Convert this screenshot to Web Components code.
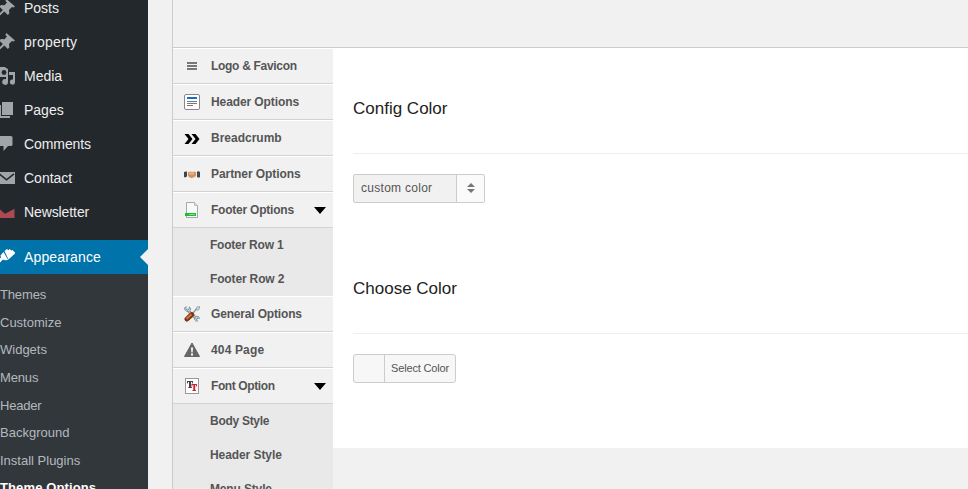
<!DOCTYPE html>
<html lang="en"><head><meta charset="utf-8"><title>Theme Options</title>
<style>html,body{margin:0;height:100%;overflow:hidden;background:#f1f1f1;font-family:"Liberation Sans",Arial,sans-serif}</style></head>
<body><admin-page></admin-page>
<script>
const icons={
pin:'<svg width="20" height="20" viewBox="0 0 20 20"><path fill="#a0a5aa" d="M10.400 3l1-2L20 8.500l-1.800 1-1.300-.4-2.900 3 .3 3.400-1.500 1.500-3.500-3.500L4.700 17.800 2 19.400l1.500-2.800L7.900 12 4.400 8.600 6 7l3.500.3 2.500-2.800z"/></svg>',
media:'<svg width="20" height="20" viewBox="0 0 20 20"><path fill="#a0a5aa" d="M2 3l2-1 1-1h5l1 1 2 1v8H2z"/><circle cx="9" cy="6.500" r="2.400" fill="#23282d"/><path fill="#a0a5aa" d="M14 6h6v10a2.600 2.600 0 1 1-2-2.500V9h-4zM12 9h1v7a2.900 2.900 0 1 1-2-2.800V11z"/></svg>',
pages:'<svg width="20" height="20" viewBox="0 0 20 20"><path fill="#a0a5aa" d="M7 2h11v13H7zM3 5h3v11h9v2H3z"/></svg>',
comments:'<svg width="20" height="20" viewBox="0 0 20 20"><path fill="#a0a5aa" d="M4 2h12q1.500 0 1.500 1.500v7Q17.500 12 16 12h-3l-4.500 5v-5H4z"/></svg>',
mail:'<svg width="20" height="20" viewBox="0 0 20 20"><path fill="#a0a5aa" d="M2 4h18v12H2z"/><path fill="none" stroke="#23282d" stroke-width="1.600" d="M3 4.800l8.500 7 7.500-6"/></svg>',
news:'<svg width="20" height="20" viewBox="0 0 20 20"><path fill="#ad4950" d="M2 5l8 6.800 9.500-5V16H2z"/></svg>',
brush:'<svg width="20" height="20" viewBox="0 0 20 20"><path fill="#fff" d="M9.500 4L12 2l1.500 1.300L14.500 2l1.800 1.500L17.500 3l3 3-7 6.500zM8.500 5l4.700 8-3.500.3-1.700-.8-5 4.800-2.500.7.500-2.500 5-5-.5-2z"/></svg>',
bars:'<svg width="16" height="16" viewBox="0 0 16 16"><path fill="#777" d="M3 4h10v2H3zm0 3h10v2H3zm0 3h10v2H3z"/></svg>',
doc:'<svg width="16" height="16" viewBox="0 0 16 16"><rect x=".5" y=".5" width="15" height="15" rx="1.500" fill="#fff" stroke="#888"/><path fill="#176fc1" d="M3 3h10v2H3z"/><path stroke="#777" d="M3 7.500h10M3 9.500h10M3 11.500h6"/></svg>',
crumb:'<svg width="16" height="16" viewBox="0 0 16 16"><path fill="#000" d="M.5 4h4l4 5-4 5h-4l4-5zM7.500 4h4l4 5-4 5h-4l4-5z"/></svg>',
partner:'<svg width="16" height="16" viewBox="0 0 16 16"><path fill="#444" d="M0 6q2-1 3-.4v5Q1 12 0 11zM13 5.500q2-.5 3 .5v5q-1 1-3 0z"/><path fill="#eee" d="M3 6h1.500v5H3zm8.500 0H13v5h-1.500z"/><path fill="#cf9366" d="M4 6.200q3-1.500 4-.2 2-1 4 .2V10q-4 3-6 1.400L4 10z"/><path fill="#e7b589" d="M5 6.500h5v2H5z"/></svg>',
footer:'<svg width="16" height="16" viewBox="0 0 16 16"><path fill="#f7faf9" stroke="#a2adab" d="M2.500.5h8l3 3v12h-11z"/><path fill="#dae2df" stroke="#9da9a6" stroke-width=".7" d="M10.500.5v3h3"/><path fill="#20ba35" d="M1 11h2v3H1zM3 11h9v3H3z"/><path fill="#99e69f" d="M5 12h6v.8H5z"/></svg>',
tools:'<svg width="16" height="16" viewBox="0 0 16 16"><path fill="none" stroke="#70848a" stroke-width="2.800" d="M3 3.500l10 10"/><path fill="none" stroke="#c7d2d4" stroke-width="1.200" d="M3 3.500l10 10"/><path fill="#d4dddd" stroke="#768990" stroke-width=".8" d="M2 .5v2.700l1.500 1 1.700-1V.8q2 1 1.400 3.200Q5.500 6 3 5.500.2 4.400.5 2zM11 12l1.500-2q2.800.2 3 2.500l-2-.7-1 1.500 1 1.900q-2 .2-2.800-1.300z"/><path stroke="#8c9ca0" stroke-width="1.500" d="M8.500 7.500l4.500-5"/><path fill="#d7dfdf" stroke="#788a8e" stroke-width=".7" d="M11.800 3.500l1-2.300L15.500.5V2l-1.200 2.200z"/><path stroke="#7d3515" stroke-width="5" stroke-linecap="round" d="M3 13l4.700-4.300"/><path stroke="#d7763b" stroke-width="2" d="M2.500 12.800l5-4.600"/></svg>',
warn:'<svg width="16" height="16" viewBox="0 0 16 16"><path fill="#666" stroke="#666" stroke-linejoin="round" d="M8 1l7.500 13.500H.5z"/><path fill="#fff" d="M7 5.500h2l-.4 5H7.400zM7 11.500h2v2H7z"/></svg>',
font:'<svg width="16" height="16" viewBox="0 0 16 16"><rect x="1.500" y=".5" width="13" height="15" fill="#fff" stroke="#999"/><path fill="#444" d="M3 3h6v2.500h-.7L8 4h-.9v5h.8v1H4.300V9H5V4h-.8l-.5 1.500H3z"/><path fill="#cf2230" d="M7.500 6H13v2.500h-.7L12 7h-.8v5h.8v1H8.500v-1h.8V7h-.8l-.3 1.500h-.7z"/></svg>'
};
function define(name,markup,setup){
 const t=document.createElement('template');t.innerHTML=markup;
 customElements.define(name,class extends HTMLElement{constructor(){super();this.attachShadow({mode:'open'}).append(t.content.cloneNode(true));}
 connectedCallback(){setup&&setup(this,this.shadowRoot)}});
}
const setIcon=(h,r)=>{r.querySelector('.icon').innerHTML=icons[h.getAttribute('icon')]||''};
define('admin-item',`<style>:host{display:flex;height:34px;align-items:center;color:#eee;font-size:14px;position:relative;white-space:nowrap}.icon{width:20px;height:20px;margin-left:-5px;margin-right:9px;flex:none}:host([active]){background:#0073aa;color:#fff;margin-top:11px}:host([active])::after{content:"";position:absolute;right:0;top:9px;border:8px solid transparent;border-left-width:0;border-right-color:#f1f1f1}svg{display:block}span{letter-spacing:var(--track,0)}</style><div class="icon"></div><span><slot></slot></span>`,setIcon);
define('admin-link',`<style>:host{display:flex;height:27.600px;align-items:center;font-size:13px;color:#b4b9be;white-space:nowrap;letter-spacing:var(--track,0)}:host([current]){color:#fff;font-weight:bold}</style><slot></slot>`);
define('admin-sidebar',`<style>:host{display:block;width:148px;height:498px;margin-top:-9px;background:#23282d;flex:none}.sub{background:#32373c;height:230px;padding-top:7px;box-sizing:border-box}</style><slot></slot><div class="sub"><slot name="sub"></slot></div>`);
define('option-row',`<style>:host{display:flex;box-sizing:border-box;height:36px;align-items:center;background:#f1f1f1;border-top:1px solid #fff;border-bottom:1px solid #d2d2d2;font:bold 12px "Liberation Sans",Arial,sans-serif;color:#555;padding:0 7px 0 11px;white-space:nowrap}.icon{width:16px;height:16px;margin-right:11px}svg{display:block}.label{flex:1;letter-spacing:var(--track,0)}.arrow{display:none;border:6px solid transparent;border-top:7px solid #000;border-bottom:0;margin-top:1px}:host([open]) .arrow{display:block}</style><div class="icon"></div><span class="label"><slot></slot></span><i class="arrow"></i>`,setIcon);
define('option-child',`<style>:host{display:flex;height:34px;align-items:center;background:#e9e9e9;font:bold 12px "Liberation Sans",Arial,sans-serif;color:#555;padding-left:37px;letter-spacing:var(--track,0);white-space:nowrap}</style><slot></slot>`);
define('option-nav',`<style>:host{display:block;width:160px;flex:none}</style><slot></slot>`);
define('option-section',`<style>:host{display:block;height:180px;padding-left:20px;box-sizing:border-box}h2{box-sizing:border-box;margin:0;height:106px;padding-top:51px;border-bottom:1px solid #eee;font-weight:normal;font-size:17px;line-height:20px;color:#222}.field{padding-top:20px;display:flex}</style><h2><slot name="title"></slot></h2><div class="field"><slot></slot></div>`);
define('select-box',`<style>:host{display:flex;box-sizing:border-box;width:132px;height:29px;border:1px solid #ccc;border-radius:2px;background:#f1f1f1;font-size:12px;color:#555;overflow:hidden}.value{width:102px;padding-left:7px;box-sizing:border-box;line-height:26px;letter-spacing:.28px}.button{flex:1;border-left:1px solid #ccc;background:#fafafa;display:grid;place-items:center}svg{transform:translateY(-1px)}</style><div class="value"><slot></slot></div><div class="button"><svg width="8" height="10" viewBox="0 0 8 10"><path fill="#777" d="M0 4l4-4 4 4zM0 6h8l-4 4z"/></svg></div>`);
define('color-button',`<style>:host{display:flex;box-sizing:border-box;width:103px;height:29px;border:1px solid #ccc;border-radius:3px;background:#f7f7f7;font-size:11px;color:#555}.swatch{width:30px;border-right:1px solid #ccc}.label{line-height:27px;padding-left:6px;white-space:nowrap;letter-spacing:-.16px}</style><div class="swatch"></div><div class="label"><slot></slot></div>`);
define('options-panel',`<style>:host{display:block;flex:1;margin-left:24px;border-left:1px solid #ccc;height:489px}.top{height:47px;border-bottom:1px solid #ccc}.body{display:flex;align-items:flex-start}.content{flex:1;height:400px;background:#fff}</style><div class="top"></div><div class="body"><slot name="nav"></slot><div class="content"><slot></slot></div></div>`);
define('admin-page',`<style>:host{display:flex;width:968px;height:489px;overflow:hidden}</style>
<admin-sidebar><admin-item icon="pin">Posts</admin-item><admin-item icon="pin" style="--track:.25px">property</admin-item><admin-item icon="media">Media</admin-item><admin-item icon="pages">Pages</admin-item><admin-item icon="comments" style="--track:-.08px">Comments</admin-item><admin-item icon="mail">Contact</admin-item><admin-item icon="news" style="--track:-.1px">Newsletter</admin-item><admin-item icon="brush" active style="--track:.15px">Appearance</admin-item>
<admin-link slot="sub" style="--track:-.15px">Themes</admin-link><admin-link slot="sub">Customize</admin-link><admin-link slot="sub">Widgets</admin-link><admin-link slot="sub" style="--track:-.15px">Menus</admin-link><admin-link slot="sub" style="--track:-.2px">Header</admin-link><admin-link slot="sub">Background</admin-link><admin-link slot="sub">Install Plugins</admin-link><admin-link slot="sub" current style="--track:.12px">Theme Options</admin-link></admin-sidebar>
<options-panel><option-nav slot="nav"><option-row icon="bars" style="--track:-.3px">Logo &amp; Favicon</option-row><option-row icon="doc" style="--track:-.1px">Header Options</option-row><option-row icon="crumb">Breadcrumb</option-row><option-row icon="partner" style="--track:-.07px">Partner Options</option-row><option-row icon="footer" open style="--track:-.22px">Footer Options</option-row><option-child style="--track:-.22px">Footer Row 1</option-child><option-child style="--track:-.15px">Footer Row 2</option-child><option-row icon="tools" style="--track:-.17px">General Options</option-row><option-row icon="warn" style="--track:.15px">404 Page</option-row><option-row icon="font" open style="--track:-.4px">Font Option</option-row><option-child style="--track:-.28px">Body Style</option-child><option-child style="--track:-.08px">Header Style</option-child><option-child style="--track:-.15px">Menu Style</option-child></option-nav>
<option-section><span slot="title">Config Color</span><select-box>custom color</select-box></option-section><option-section><span slot="title">Choose Color</span><color-button>Select Color</color-button></option-section></options-panel>`);
</script></body></html>
